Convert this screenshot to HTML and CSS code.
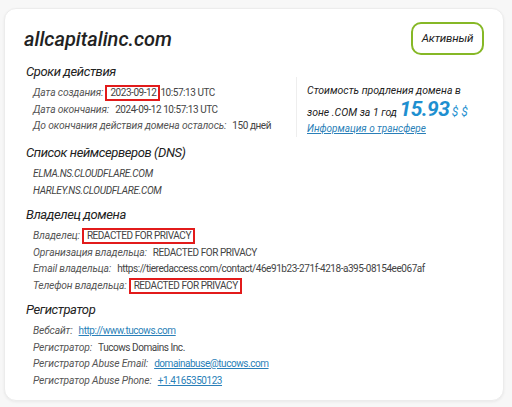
FILE: index.html
```html
<!DOCTYPE html>
<html lang="ru">
<head>
    <meta charset="UTF-8">
    <meta name="viewport" content="width=device-width, initial-scale=1.0">
    <title>allcapitalinc.com</title>
    <link rel="stylesheet" href="styles.css">
</head>
<body>

    <div class="card">
        <div class="card-head">
            <h1>allcapitalinc.com</h1>
            <span class="status">Активный</span>
        </div>

        <!-- Сроки действия -->
        <div class="dates">
            <div class="section">
                <h2>Сроки действия</h2>
                <div class="row"><span class="label">Дата создания:</span> <span class="mark">2023-09-12</span>10:57:13 UTC</div>
                <div class="row"><span class="label">Дата окончания:</span> 2024-09-12 10:57:13 UTC</div>
                <div class="row"><span class="label">До окончания действия домена осталось:</span> 150 дней</div>
            </div>
            <div class="price">
                <p>Стоимость продления домена в</p>
                <p>зоне .COM за 1 год <span class="sum">15.93</span> <span class="cur">$ $</span></p>
                <a href="#">Информация о трансфере</a>
            </div>
        </div>

        <div class="section">
            <h2>Список неймсерверов (DNS)</h2>
            <div class="row ns">ELMA.NS.CLOUDFLARE.COM</div>
            <div class="row ns">HARLEY.NS.CLOUDFLARE.COM</div>
        </div>

        <div class="section">
            <h2>Владелец домена</h2>
            <div class="row"><span class="label">Владелец:</span> <span class="mark">REDACTED FOR PRIVACY</span></div>
            <div class="row"><span class="label">Организация владельца:</span> REDACTED FOR PRIVACY</div>
            <div class="row"><span class="label">Email владельца:</span> https://tieredaccess.com/contact/46e91b23-271f-4218-a395-08154ee067af</div>
            <div class="row"><span class="label">Телефон владельца:</span> <span class="mark">REDACTED FOR PRIVACY</span></div>
        </div>

        <div class="section">
            <h2>Регистратор</h2>
            <div class="row"><span class="label">Вебсайт:</span> <a href="#">http://www.tucows.com</a></div>
            <div class="row"><span class="label">Регистратор:</span> Tucows Domains Inc.</div>
            <div class="row"><span class="label">Регистратор Abuse Email:</span> <a href="#">domainabuse@tucows.com</a></div>
            <div class="row"><span class="label">Регистратор Abuse Phone:</span> <a href="#">+1.4165350123</a></div>
        </div>
    </div>

</body>
</html>
```

FILE: styles.css
```css
body {
    font-family: Roboto, "Liberation Sans", sans-serif;
    background-color: #f7f7f7;
    margin: 0;
    padding: 8px 8px 8px 4px;
    color: #444;
}
.card {
    width: 460px;
    background: white;
    border: 1px solid #ececec;
    border-radius: 12px;
    box-shadow: 0 1px 3px rgba(0, 0, 0, 0.06);
    padding: 13px 19px 11px 19px;
}
.card-head {
    display: flex;
    justify-content: space-between;
    align-items: center;
    height: 33px;
}
h1 {
    margin: 0;
    font-style: italic;
    font-weight: 500;
    font-size: 20px;
    color: #222;
}
.status {
    border: 2px solid #86b826;
    border-radius: 10px;
    width: 69px;
    height: 29px;
    line-height: 29px;
    text-align: center;
    font-style: italic;
    font-size: 11.5px;
    letter-spacing: -0.2px;
    color: #222;
}
h2 {
    margin: 0 0 5px;
    font-style: italic;
    font-weight: normal;
    font-size: 13px;
    letter-spacing: -0.4px;
    line-height: 16px;
    color: #222;
}
.section {
    margin-top: 8px;
    padding-left: 2px;
}
.dates .section {
    margin-top: 9px;
}
.row {
    font-size: 10px;
    line-height: 16.5px;
    padding-left: 7px;
    white-space: nowrap;
    letter-spacing: -0.45px;
    color: #444;
}
.label {
    font-style: italic;
    font-size: 10.3px;
    letter-spacing: -0.15px;
    color: #555;
    margin-right: 4px;
}
.ns {
    font-style: italic;
    letter-spacing: -0.3px;
}
.mark {
    display: inline-block;
    border: 2px solid #e21b1b;
    padding: 0 2px 0 3px;
    margin-left: -4px;
    line-height: 12px;
}
.row a,
.price a {
    color: #2a7fb8;
}
.dates {
    display: flex;
    justify-content: space-between;
}
.price {
    border-left: 1px solid #eee;
    padding: 4px 0 2px 10px;
    margin-top: 22px;
    width: 177px;
    font-style: italic;
    font-size: 10.5px;
    color: #222;
    white-space: nowrap;
}
.price p {
    margin: 0;
    line-height: 19px;
}
.sum {
    font-size: 21px;
    font-weight: bold;
    color: #1e8fd0;
    line-height: 18px;
    letter-spacing: -0.6px;
}
.cur {
    font-size: 12px;
    color: #1e8fd0;
}
.price a {
    font-size: 10px;
}
```
